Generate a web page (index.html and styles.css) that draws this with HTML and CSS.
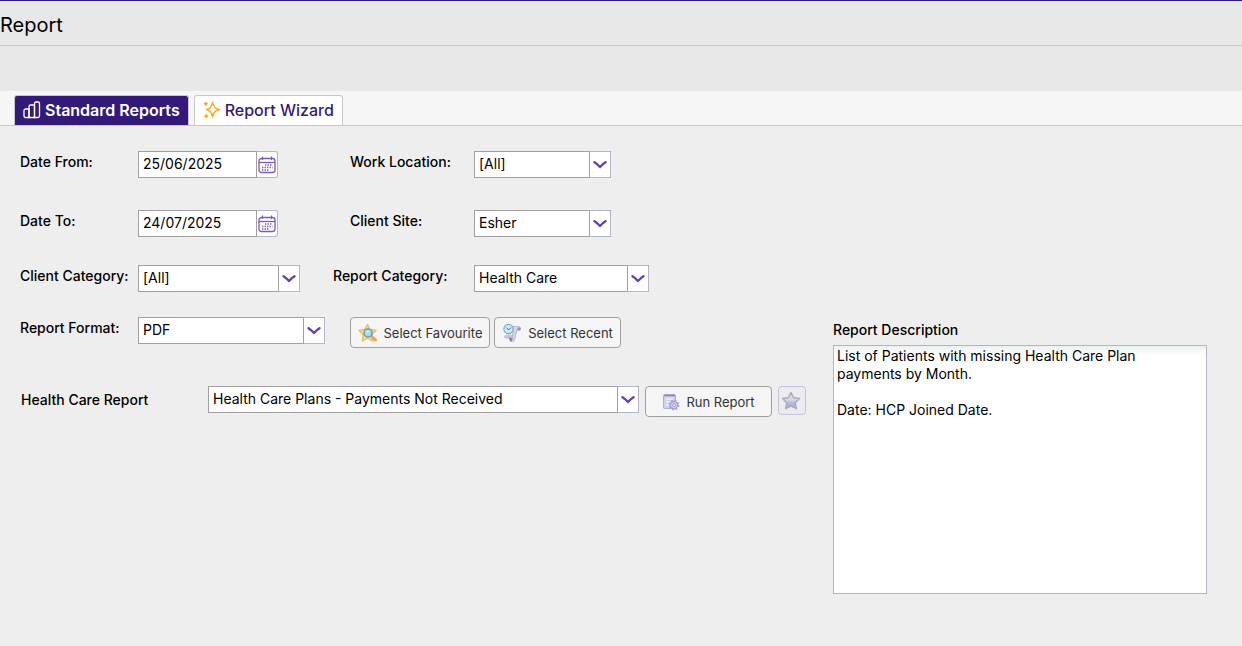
FILE: index.html
```
<!DOCTYPE html>
<html lang="en">

<head>
    <meta charset="UTF-8">
    <title>Report</title>
    <link rel="stylesheet" href="styles.css">
</head>

<body>
    <svg class="symbols" aria-hidden="true">
        <symbol id="arrow" viewBox="0 0 14 8">
            <path d="M1.5 1.2 Q4.5 3 7 6 Q9.500 3 12.500 1.200" fill="none" stroke="#6440ab" stroke-width="2.300" stroke-linecap="round" stroke-linejoin="round" />
        </symbol>
        <symbol id="calendar" viewBox="0 0 18 18">
            <g fill="none" stroke="#7a5bb8">
                <rect x="1" y="2.5" width="16" height="14" rx="2.5" stroke-width="1.3" />
                <path d="M1 6.5h16" stroke-width="1.3" />
                <path d="M4.500 .5v3.500M13.500 .5v3.500" stroke-width="1.200" />
                <path d="M7 9h7.500M4 11.500h10.500M4 14h7.500" stroke-width="1.400" stroke-dasharray="1.400 1.100" />
            </g>
        </symbol>
    </svg>

    <header class="header">
        <h1>Report</h1>
    </header>
    <div class="toolbar"></div>

    <nav class="tabs">
        <a class="tab cur" href="#standard">
            <svg width="18" height="18" viewBox="0 0 18 18" fill="none" stroke="#fff" stroke-width="1.3">
                <path d="M6 16.500H2.500A1.500 1.500 0 0 1 1 15V9.500A1.500 1.500 0 0 1 2.500 8H6z" />
                <path d="M6 16.500V5.500A1.500 1.500 0 0 1 7.500 4H11.500V16.500z" />
                <path d="M11.500 16.500V2.500A1.500 1.500 0 0 1 13 1H15A1.500 1.500 0 0 1 16.500 2.500V15A1.500 1.500 0 0 1 15 16.500z" />
            </svg>
            Standard Reports
        </a>
        <a class="tab" href="#wizard">
            <svg width="18" height="18" viewBox="0 0 18 18" fill="none" stroke="#faa61a" stroke-width="1.4" stroke-linejoin="round">
                <path d="M9.500 1.500Q10.500 7.500 16.500 8.500Q10.500 9.700 9.500 15.800Q8.500 9.700 3.500 8.500Q8.500 7.500 9.500 1.500z" />
                <path d="M2.800 .800v4M.800 2.800h4M3.300 13.200v4M1.300 15.200h4" stroke-width="1.6" />
            </svg>
            Report Wizard
        </a>
    </nav>

    <main class="content">
        <form class="form">
            <div class="row tall">
                <label for="dateFrom">Date From:</label>
                <div class="date">
                    <input type="text" id="dateFrom" value="25/06/2025">
                    <button type="button" aria-label="Pick date from"><svg width="18" height="18"><use href="#calendar" /></svg></button>
                </div>
                <label for="location">Work Location:</label>
                <div class="select small">
                    <select id="location"><option>[All]</option></select>
                    <span class="arrow"><svg width="14" height="8"><use href="#arrow" /></svg></span>
                </div>
            </div>
            <div class="row">
                <label for="dateTo">Date To:</label>
                <div class="date">
                    <input type="text" id="dateTo" value="24/07/2025">
                    <button type="button" aria-label="Pick date to"><svg width="18" height="18"><use href="#calendar" /></svg></button>
                </div>
                <label for="site">Client Site:</label>
                <div class="select small">
                    <select id="site"><option>Esher</option></select>
                    <span class="arrow"><svg width="14" height="8"><use href="#arrow" /></svg></span>
                </div>
            </div>
            <div class="row wide">
                <label for="clientCategory">Client Category:</label>
                <div class="select medium">
                    <select id="clientCategory"><option>[All]</option></select>
                    <span class="arrow"><svg width="14" height="8"><use href="#arrow" /></svg></span>
                </div>
                <label for="reportCategory">Report Category:</label>
                <div class="select category">
                    <select id="reportCategory"><option>Health Care</option></select>
                    <span class="arrow"><svg width="14" height="8"><use href="#arrow" /></svg></span>
                </div>
            </div>
            <div class="row format">
                <label for="format">Report Format:</label>
                <div class="select large">
                    <select id="format"><option>PDF</option></select>
                    <span class="arrow"><svg width="14" height="8"><use href="#arrow" /></svg></span>
                </div>
                <div class="buttons">
                    <button type="button" class="btn favourite">
                        <svg width="20" height="20" viewBox="0 0 20 20">
                            <path d="M9.500 1.500l2.600 5 6 .800-4.300 4 1.200 7-5.500-3-5.300 3 1-6.500L1 7.500l5.800-1z" fill="#f7df8c" stroke="#dcc06a" stroke-width="1.300" stroke-linejoin="round" />
                            <path d="M13.500 13.500l4 3.500" stroke="#f3a05c" stroke-width="3" stroke-linecap="round" />
                            <circle cx="10" cy="10" r="4" fill="#a9dcf5" stroke="#6f98b0" stroke-width="1.500" />
                            <path d="M8 9.500q1-2 3-1.500" stroke="#fff" fill="none" />
                        </svg>
                        Select Favourite
                    </button>
                    <button type="button" class="btn recent">
                        <svg width="20" height="20" viewBox="0 0 20 20">
                            <path d="M2 13q2-2 5-1.500l4 .5-1 4-6-.500q-2.500-.500-2-2.500z" fill="#c3c2d6" />
                            <path d="M9 3.500h7q3 0 2.500 3l-3.500.500L13 15q-.500 4-4 3.500L7 15l3 .500L11.500 6z" fill="#d5d5e3" stroke="#adacc4" stroke-width=".8" />
                            <circle cx="17" cy="6" r="1.800" fill="#9796af" />
                            <path d="M7 14.500l4 1-2 3.500q-2-1-2-4.500z" fill="#8584a0" />
                            <circle cx="6.500" cy="6" r="4.600" fill="#c5ecfb" stroke="#8da8bb" stroke-width="1.300" />
                            <path d="M4.500 4.500L6.500 7l2.500-2.500" stroke="#4b6f91" fill="none" />
                        </svg>
                        Select Recent
                    </button>
                </div>
            </div>
            <div class="row report">
                <label for="report">Health Care Report</label>
                <div class="select full">
                    <select id="report"><option>Health Care Plans - Payments Not Received</option></select>
                    <span class="arrow"><svg width="14" height="8"><use href="#arrow" /></svg></span>
                </div>
                <button type="button" class="btn run">
                    <svg width="18" height="18" viewBox="0 0 18 18">
                        <rect x="1.500" y="1.500" width="12" height="14" rx="1" fill="#cfd2ee" stroke="#aeaed4" />
                        <path d="M2 2.500h11" stroke="#8585bc" stroke-width="1.500" />
                        <path d="M4 6h7M4 9h4M4 12h3" stroke="#eff0fb" stroke-width="1.300" />
                        <circle cx="12" cy="12" r="4.600" fill="none" stroke="#a5a4c6" stroke-width="1.600" stroke-dasharray="2 1.600" />
                        <circle cx="12" cy="12" r="3.500" fill="#d7d7e9" stroke="#a5a4c6" stroke-width="1.300" />
                        <circle cx="12" cy="12" r="1.400" fill="#fff" stroke="#8887b0" stroke-width=".8" />
                    </svg>
                    Run Report
                </button>
                <button type="button" class="star" aria-label="Add to favourites">
                    <svg width="20" height="20" viewBox="0 0 20 20">
                        <linearGradient id="starFill" x2="0" y2="1">
                            <stop offset="0.4" stop-color="#dcdce6" />
                            <stop offset="0.7" stop-color="#b2b3da" />
                        </linearGradient>
                        <path d="M9 1.500l2.600 5.300 5.900.700-4.300 4.200 1.200 6-5.400-2.700-5.400 2.700 1.100-6L.500 7.500l5.900-.700z" fill="url(#starFill)" stroke="#a9a9bb" stroke-width="1.400" stroke-linejoin="round" />
                    </svg>
                </button>
            </div>
        </form>

        <section class="description">
            <label for="description">Report Description</label>
            <textarea id="description" readonly>List of Patients with missing Health Care Plan payments by Month.

Date: HCP Joined Date.</textarea>
        </section>
    </main>
</body>

</html>
```
FILE: styles.css
```
* {
    box-sizing: border-box;
}

body,
h1,
button,
input,
select,
textarea {
    margin: 0;
    padding: 0;
}

body,
button,
input,
select,
textarea {
    font-family: Inter, "Liberation Sans", sans-serif;
    font-size: 14px;
    color: #000;
}

body {
    background: #eee;
}

a {
    text-decoration: none;
}

svg {
    display: block;
    flex: none;
}

.symbols {
    position: absolute;
    width: 0;
    height: 0;
}

/* header */
.header {
    height: 46px;
    padding-top: 12px;
    border-top: 1px solid #341a78;
    border-bottom: 1px solid #c8c8c8;
    background: #e8e8e8;
}

.header h1 {
    font-size: 20px;
    line-height: 24px;
    font-weight: 400;
}

.toolbar {
    height: 45px;
    background: #e8e8e8;
}

/* tabs */
.tabs {
    display: flex;
    gap: 5px;
    padding: 4px 14px 0;
    border-bottom: 1px solid #c8c8c8;
    background: #f6f6f6;
}

.tab {
    display: flex;
    align-items: center;
    gap: 4px;
    height: 30px;
    padding: 0 8px 1px;
    border: 1px solid #c8c8c8;
    border-bottom: none;
    border-radius: 3px 3px 0 0;
    background: #fff;
    color: #341a78;
    font-size: 16px;
    font-weight: 500;
    white-space: nowrap;
}

.tab.cur {
    background: #341a78;
    color: #fff;
    font-weight: 600;
}

/* form */
.content {
    display: flex;
    padding: 25px 35px 0 20px;
}

.form {
    flex: none;
    width: 813px;
}

.row {
    display: grid;
    grid-template-columns: 118px 212px 124px auto;
    align-items: start;
    justify-content: start;
    margin-bottom: 28px;
}

.row.tall {
    margin-bottom: 32px;
}

.row.wide {
    grid-template-columns: 118px 195px 141px auto;
    margin-bottom: 25px;
}

.row.format {
    grid-template-columns: 118px 212px auto;
    margin-bottom: 38px;
}

.row.report {
    grid-template-columns: 182px 431px 127px 28px;
    column-gap: 6px;
}

label {
    font-weight: 500;
    line-height: 22px;
    white-space: nowrap;
}

.row.report label {
    padding-left: 1px;
    line-height: 28px;
}

.date {
    display: flex;
    width: 140px;
    height: 27px;
}

.date input {
    flex: 1;
    width: 0;
    padding: 0 4px 2px;
    border: 1px solid #a0a0a0;
    background: #fff;
}

.date button {
    display: flex;
    align-items: center;
    justify-content: center;
    width: 21px;
    border: 1px solid #b6b4cd;
    border-left: none;
    border-radius: 0 3px 3px 0;
    background: #fff;
}

.select {
    position: relative;
    height: 27px;
}

.select.small {
    width: 137px;
}

.select.medium {
    width: 162px;
}

.select.category {
    width: 175px;
}

.select.large {
    width: 187px;
}

.select select {
    width: 100%;
    height: 100%;
    padding: 0 26px 2px 4px;
    border: 1px solid #a0a0a0;
    border-radius: 0;
    background: #fff;
    appearance: none;
}

.select .arrow {
    position: absolute;
    top: 0;
    right: 0;
    display: flex;
    align-items: center;
    justify-content: center;
    width: 22px;
    height: 100%;
    border: 1px solid #b6b4cd;
    border-left-color: #a0a0a0;
    border-radius: 0 2px 2px 0;
    background: #fff;
    pointer-events: none;
}

/* buttons */
.buttons {
    display: flex;
    gap: 4px;
}

.btn {
    display: flex;
    align-items: center;
    justify-content: center;
    gap: 6px;
    height: 31px;
    border: 1px solid #a0a0a0;
    border-radius: 4px;
    background: #f5f5f5;
    color: #333;
    font-size: 13px;
    white-space: nowrap;
}

.btn.favourite {
    width: 140px;
}

.btn.recent {
    width: 127px;
}

.star {
    display: flex;
    align-items: center;
    justify-content: center;
    height: 29px;
    border: 1px solid #c6c2dc;
    border-radius: 4px;
    background: #ebebf0;
}

/* description */
.description {
    display: flex;
    flex: 1;
    flex-direction: column;
    min-width: 200px;
    padding-top: 168px;
}

.description label {
    margin-bottom: 4px;
}

.description textarea {
    height: 249px;
    padding: 1px 3px;
    border: 1px solid #b4b4c6;
    background: #fff linear-gradient(#eaf0f0, #fff 8px);
    line-height: 18px;
    resize: none;
    outline: none;
}
```
